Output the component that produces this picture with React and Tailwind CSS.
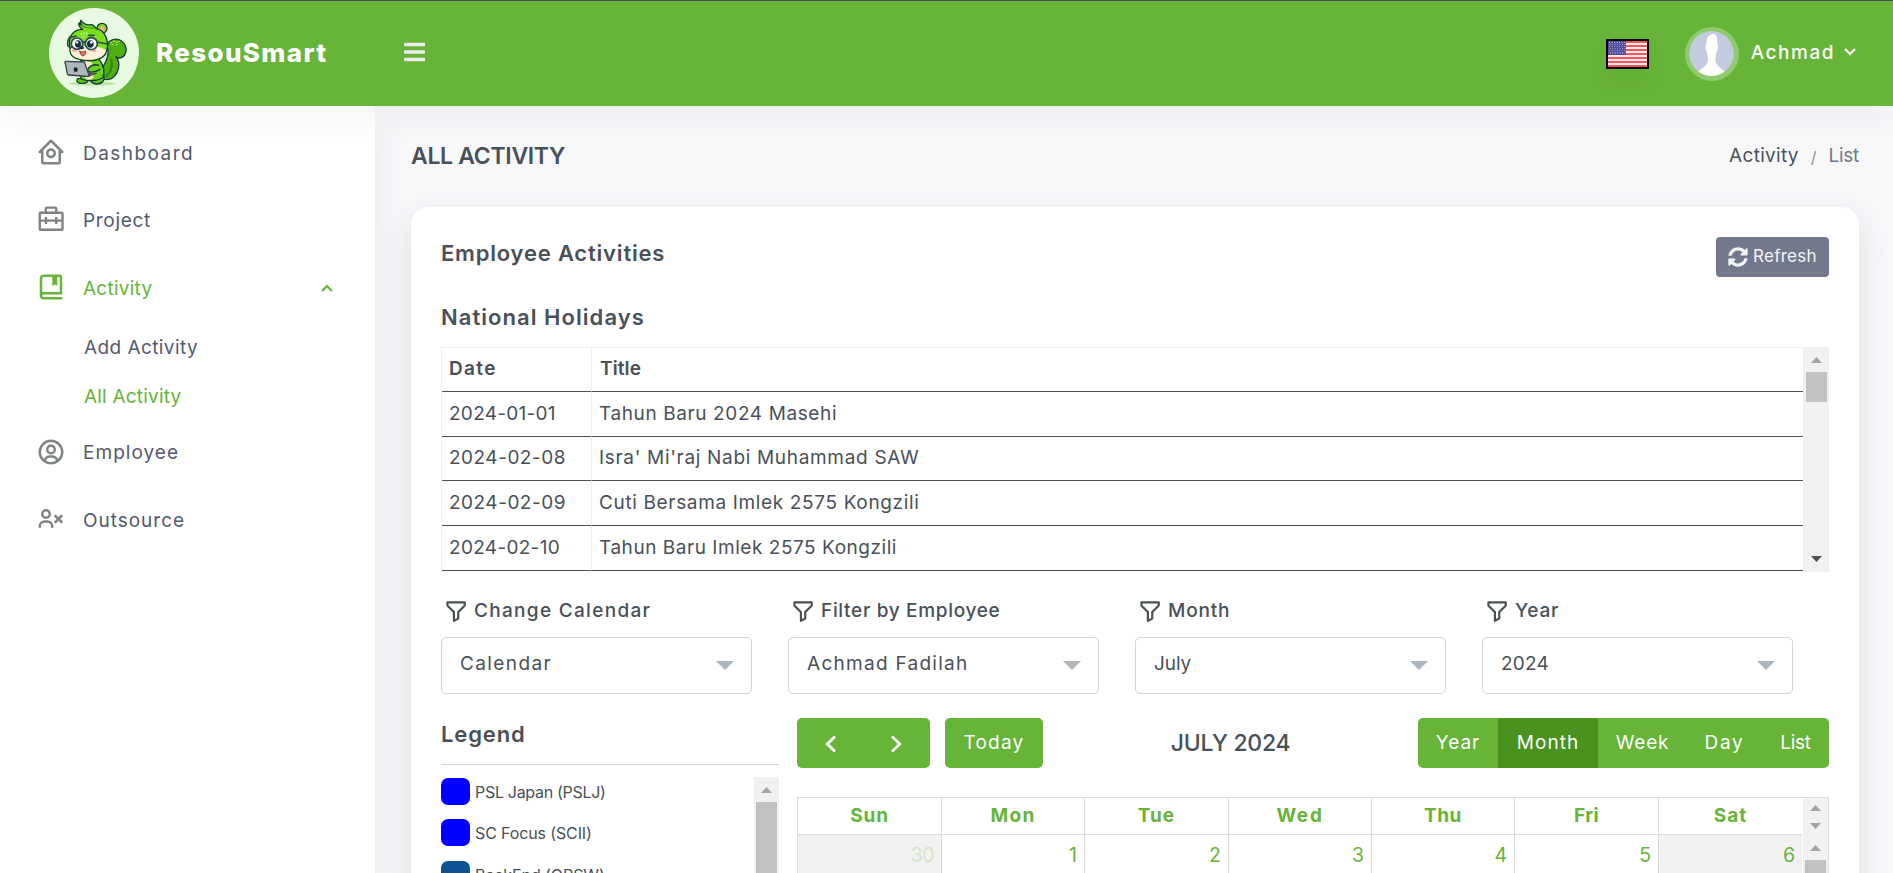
import React from "react";
import { BiHomeCircle, BiBookBookmark, BiUserCircle, BiUserX, BiFilterAlt } from "react-icons/bi";
import { FaBars, FaSyncAlt } from "react-icons/fa";

function BriefcaseIcon() {
  return (
    <svg viewBox="0 0 24 24" className="size-[30px]" fill="none" stroke="currentColor" strokeWidth="1.9" strokeLinejoin="round">
      <rect x="3" y="7" width="18.2" height="13.6" rx="0.6" />
      <path d="M7.8 7V3.6q0-.7.7-.7h7q.7 0 .7.7V7M3 13.3h18.2M8 10.3v5.6M16.2 10.3v5.6" />
    </svg>
  );
}

function Chevron({ className, d }) {
  return (
    <svg viewBox="0 0 12 8" className={className} fill="none" stroke="currentColor" strokeWidth="2.2">
      <path d={d} />
    </svg>
  );
}

function Mascot() {
  return (
    <svg viewBox="27 24 270 270" className="-mt-0.5 size-[90px] shrink-0" strokeLinejoin="round" strokeLinecap="round">
      <circle cx="162" cy="159" r="135" fill="#e8fbe2" />
      <ellipse cx="157" cy="251" rx="72" ry="6" fill="#c0e6b0" />
      <g stroke="#123c33" strokeWidth="4">
        <path d="M186 236C170 205 210 190 204 150C196 128 214 115 233 118C252 122 262 142 257 158C252 174 238 178 228 170C244 190 236 222 214 236C204 240 194 240 186 236Z" fill="#4fae12" />
        <path d="M112 236Q106 250 128 250Q146 250 144 236ZM152 232Q148 252 172 252Q196 250 192 226Z" fill="#62c814" />
        <path d="M122 182Q112 222 126 238Q160 248 188 234Q200 208 176 176Z" fill="#6bd116" />
        <path d="M132 184Q124 222 138 238Q152 242 160 234Q164 200 154 186Z" fill="#fbe6cc" stroke="none" />
        <circle cx="186" cy="85" r="15" fill="#74da1a" />
        <ellipse cx="187" cy="87" rx="7" ry="9" fill="#f7ab8d" stroke="none" />
        <path d="M90 148C82 108 100 88 128 88Q112 78 118 68Q124 78 124 74Q120 64 123 61Q136 78 152 74Q162 74 168 86C196 90 208 124 200 152C196 178 160 184 142 181C108 180 88 170 90 148Z" fill="#7ade18" />
      </g>
      <path d="M92 150C94 134 118 138 132 138C150 140 178 136 198 150C196 174 160 181 142 179C110 178 92 168 92 150Z" fill="#fff0dc" />
      <path d="M124 100v4M132 98v5M140 98v5M126 109v3M134 109v3" stroke="#d9f7a8" strokeWidth="3" />
      <path d="M124 76Q140 86 160 84" stroke="#3f9a10" strokeWidth="4" fill="none" />
      <g fill="#fff" stroke="#2b4a55" strokeWidth="5">
        <circle cx="111" cy="131" r="17" />
        <circle cx="154" cy="131" r="18" />
        <path d="M128 128Q132 124 136 128M171 126L202 132M90 110Q80 124 84 138Q88 142 94 142M94 112L108 108M146 106L162 106" fill="none" />
      </g>
      <ellipse cx="114" cy="132" rx="9" ry="11" fill="#17303a" />
      <ellipse cx="151" cy="132" rx="10" ry="11" fill="#17303a" />
      <circle cx="111" cy="127" r="3.5" fill="#fff" />
      <circle cx="154" cy="127" r="4" fill="#fff" />
      <ellipse cx="125" cy="143" rx="7" ry="5" fill="#17303a" />
      <path d="M119 154Q128 158 138 153Q136 168 128 168Q121 166 119 154Z" fill="#ee6a5c" stroke="#5a2a24" strokeWidth="2" />
      <ellipse cx="103" cy="152" rx="7" ry="3" fill="#f79b86" />
      <ellipse cx="162" cy="152" rx="8" ry="3" fill="#f79b86" />
      <path d="M176 196Q158 190 146 204Q140 212 148 216Q166 218 180 208" fill="#6bd116" stroke="#123c33" strokeWidth="4" />
      <path d="M138 218L170 220L148 229L90 226Z" fill="#5d6770" stroke="#26333d" strokeWidth="2" />
      <path d="M75 186Q75 184 78 184L133 186L147 226Q147 229 144 229L87 225Q83 225 82 221Z" fill="#aeb5bb" stroke="#39454f" strokeWidth="4" />
      <ellipse cx="107" cy="209" rx="6" ry="7" fill="#10282a" />
      <path d="M212 128h3M220 124h4M229 127h3M236 124h3M216 134h3M228 134h3" stroke="#c4f08a" strokeWidth="3" />
      <path d="M214 180Q220 206 200 228" stroke="#2f8a10" strokeWidth="7" fill="none" />
    </svg>
  );
}

function Flag() {
  const stars = [];
  for (let r = 0; r < 6; r++) for (let c = 0; c < 7; c++) stars.push([1.6 + c * 2.5 + (r % 2) * 0.6, 1.4 + r * 2.1]);
  return (
    <svg viewBox="0 0 39 26" className="block h-[26px] w-[39px]" preserveAspectRatio="none">
      <rect width="39" height="26" fill="#fde9ea" />
      {[0, 2, 4, 6, 8, 10, 12].map((i) => <rect key={i} y={i * 2} width="39" height="2" fill="#f4565c" />)}
      <rect width="18" height="14" fill="#4a4a98" />
      {stars.map(([x, y], i) => <circle key={i} cx={x} cy={y} r="0.55" fill="#c9c9e6" />)}
    </svg>
  );
}

function Avatar() {
  return (
    <div className="size-[54px] rounded-full bg-[#91ca6f] p-[4.5px]">
      <svg viewBox="0 0 45 45" className="size-[45px] rounded-full">
        <circle cx="22.5" cy="22.5" r="22.5" fill="#c3cbdf" />
        <path d="M17.4 12C17 5 21 3.400 25 2.400Q24.500 3.200 26 3.400C28.500 4.500 28.500 9 28.200 13C29.800 15 29 19 27.800 20.500C27 23.500 26.500 25 26.500 29C27 34 30 36.500 35.500 40L34 45H11L9.500 40C15 36.500 18.500 34 19 29C19 25 18.500 23.500 17.700 20.500C16.300 19 15.800 15 17.400 12Z" fill="#fff" />
      </svg>
    </div>
  );
}

const Up = ({ className }) => <svg viewBox="0 0 11 6" className={"h-1.5 w-[11px] " + className}><path d="M5.500 0L11 6H0Z" fill="currentColor" /></svg>;
const Down = ({ className }) => <svg viewBox="0 0 11 6" className={"h-1.5 w-[11px] " + className}><path d="M5.500 6L11 0H0Z" fill="currentColor" /></svg>;

function NavItem({ icon, label, track, active, open }) {
  return (
    <div className={"flex h-[67.6px] items-center pl-9 pr-[42px] " + (active ? "text-[#66b438]" : "text-[#545a6d]")}>
      <span className={"-mt-1 flex w-[47px] text-[30px] " + (active ? "text-[#66b438]" : "text-[#7f8387]")}>{icon}</span>
      <span className={"flex-1 text-[19px] " + track}>{label}</span>
      {open && <Chevron className="-mt-px h-2 w-3" d="M1 7L6 2L11 7" />}
    </div>
  );
}

const holidays = [
  ["2024-01-01", "tracking-[0.28px]", "Tahun Baru 2024 Masehi", "tracking-[0.61px]", "h-[45px]"],
  ["2024-02-08", "tracking-[0.5px]", "Isra' Mi'raj Nabi Muhammad SAW", "tracking-[0.68px]", "h-[44px]"],
  ["2024-02-09", "tracking-[0.5px]", "Cuti Bersama Imlek 2575 Kongzili", "tracking-[0.65px]", "h-[45px]"],
  ["2024-02-10", "tracking-[0.31px]", "Tahun Baru Imlek 2575 Kongzili", "tracking-[0.54px]", "h-[45px]"],
];

const filters = [
  ["Change Calendar", "tracking-[1.31px]", "Calendar", "tracking-[1.39px]"],
  ["Filter by Employee", "tracking-[0.68px]", "Achmad Fadilah", "tracking-[1.28px]"],
  ["Month", "tracking-[0.82px]", "July", "tracking-[-0.09px]"],
  ["Year", "tracking-[0.77px]", "2024", "tracking-[0.21px]"],
];

const legend = [
  ["PSL Japan (PSLJ)", "tracking-[-0.3px]", "bg-[#0000ff]"],
  ["SC Focus (SCII)", "tracking-[-0.13px]", "bg-[#0000ff]"],
  ["BackEnd (OPSW)", "tracking-[-0.08px]", "bg-[#0b5394]"],
];

const views = [
  ["Year", "w-20", "tracking-[0.95px]"],
  ["Month", "w-[100px] bg-[#48921e]", "tracking-[1.1px]"],
  ["Week", "w-[89px]", "tracking-[0.8px]"],
  ["Day", "w-[75px]", "tracking-[1.7px]"],
  ["List", "w-[67px]", "tracking-[-0.3px]"],
];

const days = [
  ["Sun", "tracking-[0.87px]", "30"],
  ["Mon", "tracking-[1.32px]", "1"],
  ["Tue", "tracking-[0.95px]", "2"],
  ["Wed", "tracking-[1.71px]", "3"],
  ["Thu", "tracking-[0.49px]", "4"],
  ["Fri", "tracking-[0.42px]", "5"],
  ["Sat", "tracking-[1.01px]", "6"],
];

export default function App() {
  return (
    <div className="flex h-[873px] w-full flex-col overflow-hidden bg-[#f8f8fb] font-['Inter',sans-serif] text-[#495057]">
      <header className="relative z-20 flex h-[106px] shrink-0 items-center border-t border-[#474c4f] bg-[#66b438] pl-[49px] pr-[37px] text-white shadow-[0_12px_36px_rgba(18,38,63,0.05)]">
        <Mascot />
        <div className="-mt-0.5 ml-[17px] w-[248px] whitespace-nowrap text-[26px] font-extrabold tracking-[1.35px]">ResouSmart</div>
        <FaBars className="-mt-1 h-6 w-[21px] text-[#e9ebf0]" preserveAspectRatio="none" />
        <div className="ml-auto border-2 border-black shadow-[0_12px_24px_rgba(18,38,63,0.03)]"><Flag /></div>
        <div className="ml-9"><Avatar /></div>
        <div className="ml-3 -mt-px text-[19px] font-medium tracking-[1.52px]">Achmad</div>
        <Chevron className="-mt-[3px] ml-[9px] h-2 w-3" d="M1 1L6 6L11 1" />
      </header>

      <div className="flex min-h-0 flex-1">
        <aside className="relative z-10 w-[375px] shrink-0 bg-white pt-[14px] shadow-[0_12px_36px_rgba(18,38,63,0.06)]">
          <NavItem icon={<BiHomeCircle />} label="Dashboard" track="tracking-[1.45px]" />
          <NavItem icon={<BriefcaseIcon />} label="Project" track="tracking-[0.68px]" />
          <NavItem icon={<BiBookBookmark />} label="Activity" track="tracking-[0.26px]" active open />
          <div className="-mb-px pl-[84px] text-[19px]">
            <div className="h-[49px] leading-[49px] tracking-[0.42px] text-[#545a6d]">Add Activity</div>
            <div className="h-[49px] leading-[49px] tracking-[0.2px] text-[#66b438]">All Activity</div>
          </div>
          <NavItem icon={<BiUserCircle />} label="Employee" track="tracking-[1.04px]" />
          <NavItem icon={<BiUserX />} label="Outsource" track="tracking-[0.98px]" />
        </aside>

        <main className="min-w-0 flex-1 pl-9 pr-[34px] pt-[26px]">
          <div className="flex h-12 items-center justify-between">
            <h1 className="text-[23px] font-semibold tracking-[-0.31px]">ALL ACTIVITY</h1>
            <div className="flex items-center pt-px text-[19px]">
              <span className="tracking-[0.3px]">Activity</span>
              <span className="mx-3 text-[16px] text-[#8a90a2]">/</span>
              <span className="tracking-[-0.3px] text-[#74788d]">List</span>
            </div>
          </div>

          <section className="mt-[27px] h-[760px] rounded-[18px] bg-white px-[30px] pt-[30px] shadow-[0_12px_36px_rgba(18,38,63,0.12)]">
            <div className="flex h-10 items-start justify-between">
              <h2 className="text-[22px] font-semibold leading-[33px] tracking-[0.8px]">Employee Activities</h2>
              <button className="flex h-10 w-[113px] items-center rounded bg-[#74788d] pl-3 text-[17px] tracking-[0.27px] text-[#f3f4f7]">
                <FaSyncAlt className="mr-[5px] size-5" />
                <span className="-mt-px">Refresh</span>
              </button>
            </div>
            <h2 className="mt-6 text-[22px] font-semibold leading-[33px] tracking-[1.05px]">National Holidays</h2>

            <div className="mt-[13px] flex h-[225px] text-[19px]">
              <div className="flex-1 border-l border-t border-[#eff0f2]">
                <div className="flex h-11 items-center font-semibold">
                  <div className="flex h-full w-[149px] items-center border-b border-[#495057] pl-[7px] tracking-[1.37px]">Date</div>
                  <div className="flex h-full flex-1 items-center border-b border-l border-b-[#495057] border-l-[#eff0f2] pl-2 tracking-[0.12px]">Title</div>
                </div>
                {holidays.map(([d, dt, t, tt, h]) => (
                  <div key={d} className={"flex items-center " + h}>
                    <div className={"flex h-full w-[149px] items-center border-b border-[#495057] pl-[7px] " + dt}>{d}</div>
                    <div className={"flex h-full flex-1 items-center border-b border-l border-b-[#495057] border-l-[#eff0f2] pl-[7px] " + tt}>{t}</div>
                  </div>
                ))}
              </div>
              <div className="flex w-[26px] flex-col items-center bg-[#f1f1f1]">
                <Up className="mt-2.5 text-[#a3a3a3]" />
                <div className="mt-[9px] h-[30px] w-[21px] bg-[#c1c1c1]" />
                <Down className="mb-2.5 mt-auto text-[#505050]" />
              </div>
            </div>

            <div className="mt-[22px] grid w-[1388px] grid-cols-4">
              {filters.map(([l, lt, v, vt]) => (
                <div key={l} className="pr-9">
                  <div className="flex h-[33px] items-center pl-px text-[19px] font-medium">
                    <BiFilterAlt className="size-[26px]" />
                    <span className={"ml-[6px] pt-px " + lt}>{l}</span>
                  </div>
                  <div className="mt-2.5 flex h-[57px] items-center justify-between rounded-[5px] border border-[#ced4da] pl-[18px] pr-[17px] text-[19px]">
                    <span className={"-mt-0.5 " + vt}>{v}</span>
                    <svg viewBox="0 0 18 9" className="h-[9px] w-[18px]"><path d="M0 0H18L9 9Z" fill="#adb5bd" /></svg>
                  </div>
                </div>
              ))}
            </div>

            <div className="mt-6 flex">
              <div className="w-[338px]">
                <h2 className="text-[22px] font-semibold leading-[33px] tracking-[0.86px]">Legend</h2>
                <div className="mt-[13px] h-px bg-[#d6d8da]" />
                <div className="mt-3 flex h-[200px]">
                  <div className="flex-1 pt-px">
                    {legend.map(([t, tr, bg]) => (
                      <div key={t} className="flex h-[41.3px] items-start">
                        <span className={"h-[27px] w-[29px] rounded-[7px] " + bg} />
                        <span className={"ml-[5px] text-[16px] leading-[29px] " + tr}>{t}</span>
                      </div>
                    ))}
                  </div>
                  <div className="flex w-[25px] flex-col items-center bg-[#f1f1f1]">
                    <Up className="mt-2.5 shrink-0 text-[#a3a3a3]" />
                    <div className="mt-[9px] w-[21px] flex-1 bg-[#c1c1c1]" />
                  </div>
                </div>
              </div>

              <div className="ml-[18px] flex-1">
                <div className="flex items-center justify-between">
                  <div className="flex gap-[15px] text-white">
                    <div className="flex h-[50px] w-[133px] items-center justify-center gap-[55px] rounded-[5px] bg-[#66b438]">
                      <svg viewBox="0 0 11 18" className="mt-0.5 h-[18px] w-[11px]" fill="none" stroke="currentColor" strokeWidth="2.8"><path d="M10 1.500L2.200 9L10 16.500" /></svg>
                      <svg viewBox="0 0 11 18" className="mt-0.5 h-[18px] w-[11px]" fill="none" stroke="currentColor" strokeWidth="2.8"><path d="M1 1.500L8.800 9L1 16.500" /></svg>
                    </div>
                    <div className="h-[50px] w-[98px] rounded-[5px] bg-[#66b438] text-center text-[19px] leading-[49px] tracking-[1.2px]">Today</div>
                  </div>
                  <div className="text-[23px] font-medium tracking-[-0.3px]">JULY 2024</div>
                  <div className="flex h-[50px] overflow-hidden rounded-[5px] bg-[#66b438] text-center text-[19px] leading-[49px] text-white">
                    {views.map(([v, w, tr]) => <div key={v} className={w + " " + tr}>{v}</div>)}
                  </div>
                </div>

                <div className="mt-[29px] flex h-[200px] border border-[#dcdcdc]">
                  <div className="mr-px grid flex-1 grid-cols-[143px_143px_144px_143px_143px_144px_1fr]">
                    {days.map(([d, tr, n], i) => (
                      <div key={d} className={i ? "border-l border-[#dcdcdc]" : ""}>
                        <div className={"h-[37px] border-b border-[#dcdcdc] text-center text-[19px] font-bold leading-[35px] text-[#66b438] " + tr}>{d}</div>
                        <div className={"h-[170px] pr-[7px] pt-[5px] text-right text-[19.5px] leading-[30px] " + (i === 0 || i === 6 ? "bg-[#f1f1f1] " : "") + (i === 0 ? "tracking-[-0.5px] text-[#d2e4c8]" : "text-[#66b438]")}>{n}</div>
                      </div>
                    ))}
                  </div>
                  <div className="flex w-[25px] flex-col items-center bg-[#f1f1f1] text-[#a3a3a3]">
                    <Up className="mt-[7px] shrink-0" />
                    <Down className="mt-3 shrink-0" />
                    <Up className="mt-4 shrink-0" />
                    <div className="mt-[9px] w-[21px] flex-1 bg-[#c1c1c1]" />
                  </div>
                </div>
              </div>
            </div>
          </section>
        </main>
      </div>
    </div>
  );
}
